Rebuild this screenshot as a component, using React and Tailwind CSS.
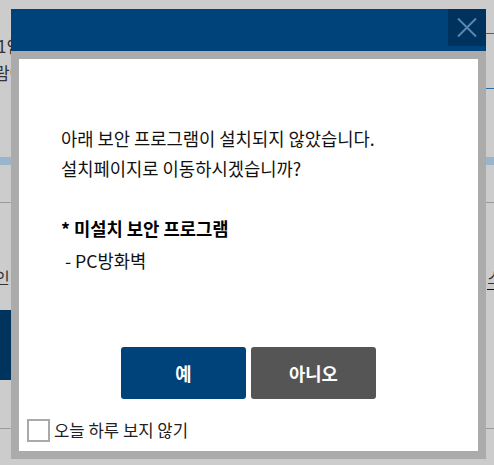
export default function App() {
  const font = { fontFamily: '"Noto Sans CJK KR", "Noto Sans", sans-serif' };
  return (
    <div
      className="relative w-[494px] h-[465px] bg-[#cccccc] overflow-hidden"
      style={font}
    >
      {/* dimmed page behind the dialog */}
      <div className="flex flex-col w-full text-[#1a1a1a]">
        <div className="h-[33px]" />
        <div className="h-[1px] flex justify-end">
          <div className="w-[10px] bg-[#2f6aa3]" />
        </div>
        <div className="h-[24px] flex items-center">
          <span className="-ml-[3px] text-[17px] leading-[24px] text-[#333]">1인</span>
        </div>
        <div className="h-[30px] flex items-center">
          <span className="-ml-[6px] text-[17px] leading-[30px] text-[#333]">람에</span>
        </div>
        <div className="h-[1px] flex justify-end">
          <div className="w-[10px] bg-[#2f6aa3]" />
        </div>
        <div className="h-[68px]" />
        <div className="h-[8px] bg-[#9ab4cb]" />
        <div className="h-[37px]" />
        <div className="h-[1px] bg-[#9a9a9a]" />
        <div className="h-[62px]" />
        <div className="h-[24px] flex items-center justify-between">
          <span className="-ml-[5px] text-[16px] leading-[24px] text-[#333]">인</span>
          <span className="-mr-[8px] text-[16px] leading-[24px] text-[#333] border-b border-[#111]">스</span>
        </div>
        <div className="h-[21px]" />
        <div className="h-[70px] flex">
          <div className="w-[40px] bg-[#00345c]" />
        </div>
        <div className="h-[48px]" />
        <div className="h-[1px] bg-[#9a9a9a]" />
      </div>

      {/* dialog */}
      <div className="absolute left-[11px] top-[9px] w-[475px] h-[450px] flex flex-col">
        <div className="h-[42px] bg-[#00427a] flex justify-end items-start">
          <button className="w-[38px] h-[37px] bg-[#00325e] flex items-center justify-center">
            <svg width="20" height="19" viewBox="0 0 20 19">
              <path d="M1 0.5 L19 18.5 M19 0.5 L1 18.5" stroke="#5a86b1" strokeWidth="2" fill="none" />
            </svg>
          </button>
        </div>
        <div className="flex-1 bg-[#ababab] p-[8px] flex">
          <div className="flex-1 bg-white flex flex-col">
            <div className="pt-[64px] pl-[42px] text-[17.7px] leading-[30px] text-[#111]">
              <p>아래 보안 프로그램이 설치되지 않았습니다.</p>
              <p>설치페이지로 이동하시겠습니까?</p>
              <p>&nbsp;</p>
              <p className="font-bold text-black">* 미설치 보안 프로그램</p>
              <p className="mt-[2px]">&nbsp;- PC방화벽</p>
            </div>
            <div className="mt-[72px] flex justify-center gap-[5px]">
              <button className="w-[125px] h-[52px] rounded-[3px] bg-[#00427a] text-white font-bold text-[17.7px]">
                예
              </button>
              <button className="w-[125px] h-[52px] rounded-[3px] bg-[#555555] text-white font-bold text-[17.7px]">
                아니오
              </button>
            </div>
            <div className="mt-[20px] pl-[8px] flex items-center gap-[4px]">
              <div className="w-[23px] h-[23px] border-2 border-[#a9a9a9] bg-white" />
              <span className="text-[16.7px] leading-[23px] text-[#222]">오늘 하루 보지 않기</span>
            </div>
          </div>
        </div>
      </div>
    </div>
  );
}
